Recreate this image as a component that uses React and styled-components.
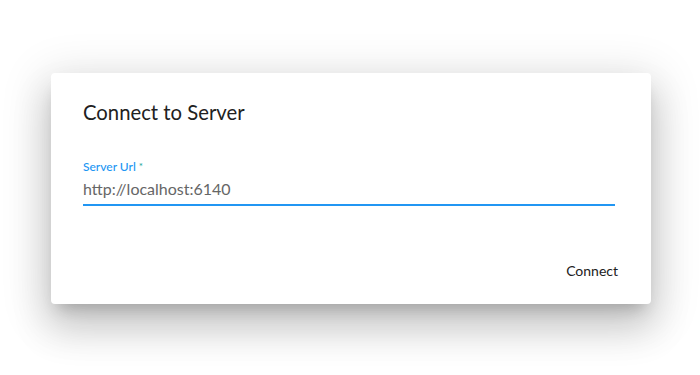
import React, { useState } from 'react';
import styled, { createGlobalStyle } from 'styled-components';

const GlobalStyle = createGlobalStyle`
  html, body {
    margin: 0;
    padding: 0;
    background: #ffffff;
    font-family: Lato, "Open Sans", sans-serif;
  }
`;

export default function App() {
  const [url, setUrl] = useState('http://localhost:6140');

  return (
    <>
      <GlobalStyle />
      <Page>
        <Dialog>
          <Title>Connect to Server</Title>
          <Field>
            <Label>
              Server Url <Required>*</Required>
            </Label>
            <Input value={url} onChange={(e) => setUrl(e.target.value)} />
          </Field>
          <Actions>
            <TextButton>Connect</TextButton>
          </Actions>
        </Dialog>
      </Page>
    </>
  );
}

const Page = styled.div`
  display: flex;
  width: 700px;
  height: 375px;
  padding: 73px 0 0 51px;
  box-sizing: border-box;
`;

const Dialog = styled.div`
  display: flex;
  flex-direction: column;
  width: 600px;
  height: 231px;
  box-sizing: border-box;
  background: #fff;
  border-radius: 4px;
  box-shadow: 0 11px 15px -7px rgba(0, 0, 0, 0.2),
    0 24px 38px 3px rgba(0, 0, 0, 0.14), 0 9px 46px 8px rgba(0, 0, 0, 0.12);
  padding: 24px 36px 0 32px;
`;

const Title = styled.h2`
  margin: 0;
  font-size: 20.3px;
  font-weight: 400;
  line-height: 30px;
  color: #212121;
`;

const Field = styled.div`
  display: flex;
  flex-direction: column;
  margin-top: 32px;
`;

const Label = styled.label`
  font-size: 12px;
  font-weight: 500;
  line-height: 14px;
  color: #2196f3;
`;

const Required = styled.span`
  color: #26a69a;
  font-size: 10px;
  vertical-align: 1px;
`;

const Input = styled.input`
  border: none;
  border-bottom: 2px solid #2196f3;
  outline: none;
  padding: 5px 0 5px;
  margin: 0;
  font-family: Lato, "Open Sans", sans-serif;
  font-size: 16px;
  line-height: 20px;
  color: #666666;
  background: transparent;
`;

const Actions = styled.div`
  display: flex;
  justify-content: flex-end;
  margin-top: auto;
  margin-right: -11px;
  padding-bottom: 19px;
`;

const TextButton = styled.button`
  border: none;
  background: transparent;
  font-family: Lato, "Open Sans", sans-serif;
  font-size: 14px;
  color: #212121;
  padding: 6px 8px;
  cursor: pointer;
`;
